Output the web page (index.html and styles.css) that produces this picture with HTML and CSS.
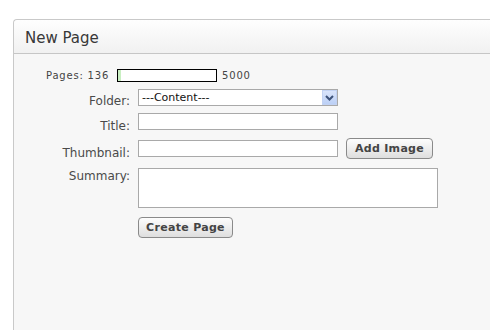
FILE: index.html
```html
<!DOCTYPE html>
<html>
<head>
<meta charset="utf-8">
<link rel="stylesheet" href="styles.css">
</head>
<body>
<div class="panel">
  <div class="panel-head">New Page</div>
  <div class="panel-body">
    <div class="quota">
      <span class="quota-label">Pages: 136</span>
      <span class="quota-bar"><span class="quota-fill" style="width:3px"></span></span>
      <span class="quota-max">5000</span>
    </div>
    <div class="form">
      <label class="lbl">Folder:</label>
      <div class="field">
        <div class="select">
          <span class="select-text">---Content---</span>
          <span class="select-btn"><svg width="9" height="6" viewBox="0 0 9 6"><path d="M1 1 L4.5 4.5 L8 1" fill="none" stroke="#3d527a" stroke-width="2"/></svg></span>
        </div>
      </div>
      <label class="lbl">Title:</label>
      <div class="field"><div class="input"></div></div>
      <label class="lbl">Thumbnail:</label>
      <div class="field field-row"><div class="input"></div><button class="btn btn-add">Add Image</button></div>
      <label class="lbl lbl-top">Summary:</label>
      <div class="field"><div class="textarea"></div></div>
      <div></div>
      <div class="field"><button class="btn btn-create">Create Page</button></div>
    </div>
  </div>
</div>
</body>
</html>
```
FILE: styles.css
```css
html, body {
  margin: 0;
  padding: 0;
  background: #ffffff;
  overflow: hidden;
  width: 490px;
  height: 330px;
}
body {
  font-family: "DejaVu Sans", Verdana, sans-serif;
  color: #444;
  padding: 19px 0 0 13px;
  box-sizing: border-box;
}
.panel {
  width: 100%;
  height: 100%;
  border: 1px solid #c9c9c9;
  border-right: none;
  border-bottom: none;
  border-radius: 4px 0 0 0;
  background: #f7f7f7;
  box-sizing: border-box;
}
.panel-head {
  height: 34px;
  box-sizing: border-box;
  padding: 10px 0 0 11px;
  font-size: 15px;
  line-height: 17px;
  color: #383838;
  background: linear-gradient(#fefefe, #f1f1f1);
  border-bottom: 1px solid #c6c6c6;
  border-radius: 4px 0 0 0;
}
.panel-body {
  padding-top: 15px;
}
.quota {
  display: flex;
  align-items: center;
  height: 13px;
  padding-left: 32px;
  font-size: 10px;
  letter-spacing: 0.8px;
  color: #444;
}
.quota-label {
  margin-right: 8px;
}
.quota-bar {
  display: block;
  width: 100px;
  height: 13px;
  box-sizing: border-box;
  border: 1px solid #000;
  background: #fff;
}
.quota-fill {
  display: block;
  height: 100%;
  background: #c9efc2;
}
.quota-max {
  margin-left: 5px;
}
.form {
  display: grid;
  grid-template-columns: 116px auto;
  column-gap: 8px;
  margin-top: 7px;
  align-items: center;
}
.lbl {
  text-align: right;
  font-size: 12px;
  color: #4a4a4a;
}
.lbl-top {
  align-self: start;
  padding-top: 1px;
}
.field {
  display: flex;
  align-items: center;
}
.select {
  width: 200px;
  height: 17px;
  box-sizing: border-box;
  border: 1px solid #a9a9a9;
  background: #fff;
  display: flex;
  align-items: center;
  justify-content: space-between;
  margin-bottom: 7px;
}
.select-text {
  font-size: 11px;
  color: #111;
  padding-left: 3px;
}
.select-btn {
  width: 15px;
  height: 15px;
  box-sizing: border-box;
  background: linear-gradient(#d9e4fb, #bcd0f6);
  border: 1px solid #c2d2f3;
  display: flex;
  align-items: center;
  justify-content: center;
}
.input {
  width: 200px;
  height: 17px;
  box-sizing: border-box;
  border: 1px solid #a9a9a9;
  background: #fff;
}
.field > .input {
  margin-bottom: 8px;
}
.field-row {
  margin-bottom: 9px;
}
.field-row > .input {
  margin-bottom: 0;
}
.textarea {
  width: 300px;
  height: 40px;
  box-sizing: border-box;
  border: 1px solid #a9a9a9;
  background: #fff;
  margin-bottom: 9px;
}
.btn {
  font-family: "DejaVu Sans", Verdana, sans-serif;
  font-weight: bold;
  font-size: 11px;
  letter-spacing: 0.3px;
  color: #444;
  height: 21px;
  padding: 0 7px;
  border: 1px solid #8a8a8a;
  border-radius: 4px;
  background: linear-gradient(#fdfdfd, #dedede);
  box-sizing: border-box;
}
.btn-add {
  margin-left: 8px;
  width: 87px;
}
.btn-create {
  width: 95px;
}
```
